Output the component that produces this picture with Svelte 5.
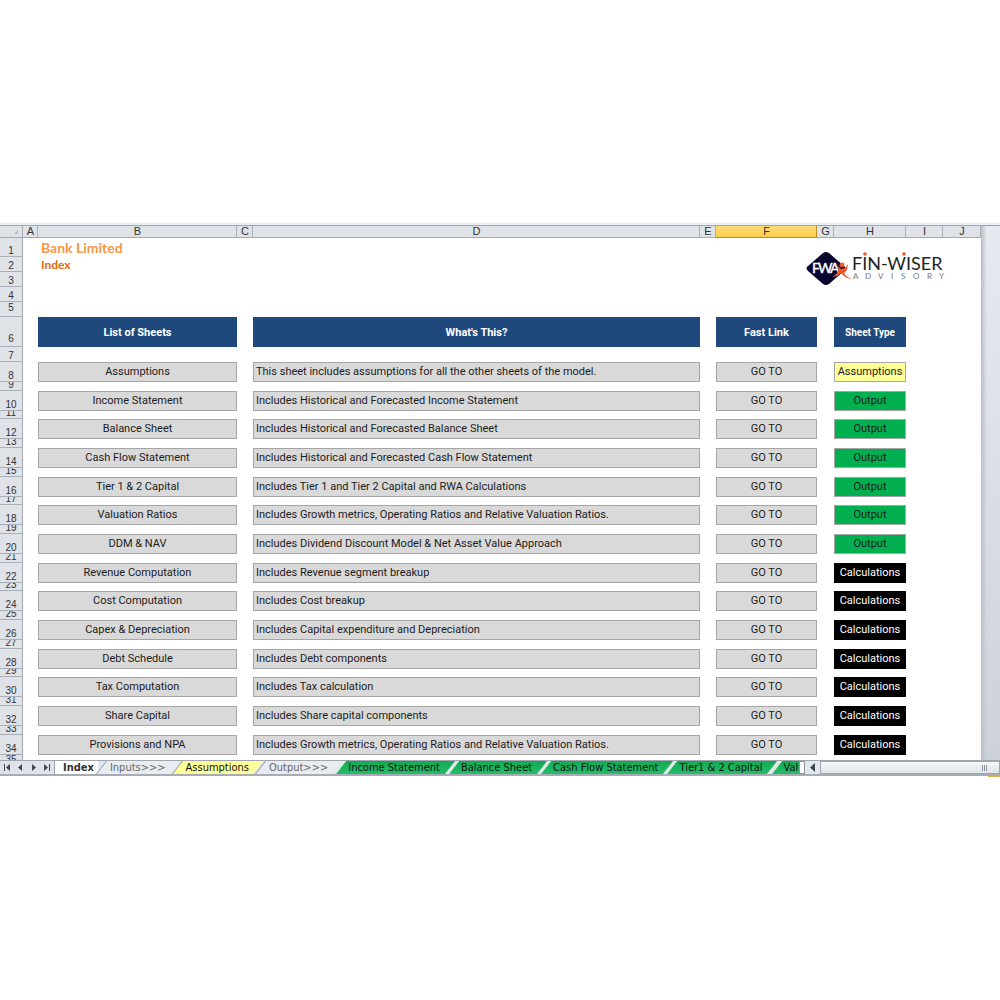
<script lang="ts">
  interface Sheet {
    name: string;
    about: string;
    type: 'Assumptions' | 'Output' | 'Calculations';
  }

  interface Tab {
    label: string;
    kind: 'active' | 'plain' | 'yellow' | 'green';
  }

  const letters = ['A', 'B', 'C', 'D', 'E', 'F', 'G', 'H', 'I', 'J'];

  const sheets: Sheet[] = [
    { name: 'Assumptions', about: 'This sheet includes assumptions for all the other sheets of the model.', type: 'Assumptions' },
    { name: 'Income Statement', about: 'Includes Historical and Forecasted Income Statement', type: 'Output' },
    { name: 'Balance Sheet', about: 'Includes Historical and Forecasted Balance Sheet', type: 'Output' },
    { name: 'Cash Flow Statement', about: 'Includes Historical and Forecasted Cash Flow Statement', type: 'Output' },
    { name: 'Tier 1 & 2 Capital', about: 'Includes Tier 1 and Tier 2 Capital and RWA Calculations', type: 'Output' },
    { name: 'Valuation Ratios', about: 'Includes Growth metrics, Operating Ratios and Relative Valuation Ratios.', type: 'Output' },
    { name: 'DDM & NAV', about: 'Includes Dividend Discount Model & Net Asset Value Approach', type: 'Output' },
    { name: 'Revenue Computation', about: 'Includes Revenue segment breakup', type: 'Calculations' },
    { name: 'Cost Computation', about: 'Includes Cost breakup', type: 'Calculations' },
    { name: 'Capex & Depreciation', about: 'Includes Capital expenditure and Depreciation', type: 'Calculations' },
    { name: 'Debt Schedule', about: 'Includes Debt components', type: 'Calculations' },
    { name: 'Tax Computation', about: 'Includes Tax calculation', type: 'Calculations' },
    { name: 'Share Capital', about: 'Includes Share capital components', type: 'Calculations' },
    { name: 'Provisions and NPA', about: 'Includes Growth metrics, Operating Ratios and Relative Valuation Ratios.', type: 'Calculations' },
  ];

  const tabs: Tab[] = [
    { label: 'Index', kind: 'active' },
    { label: 'Inputs>>>', kind: 'plain' },
    { label: 'Assumptions', kind: 'yellow' },
    { label: 'Output>>>', kind: 'plain' },
    { label: 'Income Statement', kind: 'green' },
    { label: 'Balance Sheet', kind: 'green' },
    { label: 'Cash Flow Statement', kind: 'green' },
    { label: 'Tier1 & 2 Capital', kind: 'green' },
    { label: 'Valuation Ratios', kind: 'green' },
  ];

  const navs = [
    { label: 'First sheet', path: 'M2 1h1v7H2zM8 1v7L4 4.500z' },
    { label: 'Previous sheet', path: 'M6 1v7L2 4.500z' },
    { label: 'Next sheet', path: 'M3 1v7l4-3.500z' },
    { label: 'Last sheet', path: 'M1 1v7l4-3.500zM6 1h1v7H6z' },
  ];
</script>

{#snippet rowNumber(n: number)}
  <th class="number" scope="row"><span>{n}</span></th>
{/snippet}

<main class="workbook">
  <div class="view">
    <table>
      <colgroup>
        <col class="c-num" />
        {#each letters as letter}
          <col class="c-{letter.toLowerCase()}" />
        {/each}
      </colgroup>
      <thead>
        <tr class="letters">
          <th class="corner" aria-label="Select all">
            <svg width="4" height="4" viewBox="0 0 4 4"><path d="M4 0v4H0z" fill="#b4bac2" /></svg>
          </th>
          {#each letters as letter}
            <th scope="col" class:selected={letter === 'F'}>{letter}</th>
          {/each}
        </tr>
      </thead>
      <tbody>
        <tr class="h19">
          {@render rowNumber(1)}
          <td></td>
          <td colspan="5"><h1>Bank Limited</h1></td>
          <td></td>
          <td colspan="3" rowspan="4">
            <svg class="logo" width="140" height="40" viewBox="0 0 140 40" role="img" aria-label="Fin-Wiser Advisory">
              <path
                d="M17 3q3-2 6 0l15 13q3 2 0 5L23 34q-3 2-6 0L2 21q-3-3 0-5z"
                fill="#08062f"
              />
              <text y="23" class="mark">
                <tspan x="6">F</tspan><tspan x="12">W</tspan><tspan x="24">A</tspan>
              </text>
              <circle cx="36" cy="15" r="2.400" fill="#f0562b" />
              <path d="M31 15l4 4 4-1 3-4-1 6-3 3 2 3 7 4-8-3-4-4-4 3-4 1 4-4 2-4z" fill="#f0562b" />
              <text x="46" y="20" class="brand">FIN-WISER</text>
              <circle cx="59" cy="4" r="1.800" fill="#f0562b" />
              <circle cx="98" cy="4" r="1.800" fill="#f0562b" />
              <text y="29" class="tagline">
                <tspan x="47">A</tspan><tspan x="59">D</tspan><tspan x="72">V</tspan><tspan x="85">I</tspan><tspan x="95">S</tspan><tspan x="107">O</tspan><tspan x="121">R</tspan><tspan x="133">Y</tspan>
              </text>
            </svg>
          </td>
        </tr>
        <tr class="h15">
          {@render rowNumber(2)}
          <td></td>
          <td colspan="5"><h2>Index</h2></td>
        </tr>
        {#each [3, 4] as n}
          <tr class="h15">{@render rowNumber(n)}<td colspan="7"></td></tr>
        {/each}
        <tr class="h15 raised">{@render rowNumber(5)}<td colspan="10"></td></tr>
        <tr class="h30">
          {@render rowNumber(6)}
          <td></td>
          <th class="heading">List of Sheets</th>
          <td></td>
          <th class="heading">What's This?</th>
          <td></td>
          <th class="heading">Fast Link</th>
          <td></td>
          <th class="heading small">Sheet Type</th>
          <td colspan="2"></td>
        </tr>
        <tr class="h15">{@render rowNumber(7)}<td colspan="10"></td></tr>
        {#each sheets as sheet, i}
          <tr class="h20">
            {@render rowNumber(8 + i * 2)}
            <td></td>
            <td class="cell">{sheet.name}</td>
            <td></td>
            <td class="cell about">{sheet.about}</td>
            <td></td>
            <td class="cell"><a href="#{sheet.name}">GO TO</a></td>
            <td></td>
            <td class="cell {sheet.type.toLowerCase()}">{sheet.type}</td>
            <td colspan="2"></td>
          </tr>
          <tr class={i === sheets.length - 1 ? 'cut' : i % 3 === 1 ? 'h8' : 'h9'}>
            {@render rowNumber(9 + i * 2)}
            <td colspan="10"></td>
          </tr>
        {/each}
      </tbody>
    </table>
    <div class="gutter"></div>
  </div>

  <footer>
    <div class="navs">
      {#each navs as nav}
        <button aria-label={nav.label}>
          <svg width="9" height="9" viewBox="0 0 9 9"><path d={nav.path} fill="#3c4654" /></svg>
        </button>
      {/each}
    </div>
    <nav class="tabs" aria-label="Sheets">
      {#each tabs as tab}
        <button class="tab {tab.kind}"><span>{tab.label}</span></button>
      {/each}
    </nav>
    <div class="splitter"></div>
    <button class="left" aria-label="Scroll left">
      <svg width="9" height="9" viewBox="0 0 9 9"><path d="M7 0v9L2 4.500z" fill="#3c4654" /></svg>
    </button>
    <div class="scroll"><i></i><i></i><i></i></div>
  </footer>
  <div class="status"></div>
</main>

<style>
  :global(body) {
    background: #fff;
  }

  .workbook {
    padding-top: 223px;
    font-family: Roboto, Calibri, sans-serif;
    font-size: 11px;
    color: #1c1c1c;
  }

  .workbook::before {
    content: "";
    display: block;
    height: 2px;
    background: #e9edf6;
  }

  .view {
    display: flex;
    border-top: 1px solid #a0a6b2;
    background: #fff;
  }

  table {
    flex: 1;
    width: 0;
    table-layout: fixed;
    border-collapse: separate;
    border-spacing: 0;
  }

  th,
  td {
    padding: 0;
  }

  .c-num { width: 23px; }
  .c-a { width: 15px; }
  .c-b { width: 199px; }
  .c-c { width: 16px; }
  .c-e { width: 16px; }
  .c-f { width: 101px; }
  .c-g { width: 17px; }
  .c-h { width: 72px; }
  .c-i { width: 37px; }
  .c-j { width: 38px; }

  .letters th {
    box-sizing: border-box;
    height: 12px;
    padding-left: 1px;
    border-right: 1px solid #a9afb8;
    border-bottom: 1px solid #a3a9b2;
    background: #dfe3e8;
    font: 11px/11px "Liberation Sans", Arial, sans-serif;
    color: #333;
  }

  .letters .selected {
    border-color: #c08a26;
    background: linear-gradient(#fbdc78, #ffd04c);
  }

  .corner svg {
    display: block;
    margin-left: auto;
    margin-right: 4px;
  }

  .number {
    border-right: 1px solid #a3a9b2;
    border-bottom: 1px solid #a9afb8;
    background: #dfe3e8;
    font: 10px/10px "Liberation Sans", Arial, sans-serif;
    color: #333;
    vertical-align: top;
  }

  .number span {
    display: flex;
    align-items: flex-end;
    justify-content: center;
    overflow: hidden;
  }

  .h8 span { height: 7px; }
  .h9 span { height: 8px; }
  .h15 span { height: 14px; }
  .h19 span { height: 18px; }
  .h20 span { height: 19px; }
  .h30 span { height: 27px; padding-bottom: 2px; }
  .raised span { height: 11px; padding-bottom: 3px; }
  .cut span { height: 5px; align-items: flex-start; }
  .cut .number { border-bottom: 0; }

  h1,
  h2 {
    margin: 0;
    padding-left: 3px;
    font-family: Lato, Calibri, sans-serif;
    font-size: 14px;
    line-height: 19px;
    color: #f79646;
    white-space: nowrap;
  }

  h2 {
    font-size: 12px;
    line-height: 14px;
    color: #e26b0a;
  }

  .logo {
    display: block;
    margin: 0 0 0 -28px;
    overflow: visible;
  }

  .mark {
    font: 14px Lato, sans-serif;
    fill: #fff;
    stroke: #fff;
    stroke-width: 0.4px;
  }

  .brand {
    font: 18px Lato, sans-serif;
    fill: #222;
  }

  .tagline {
    font: 8px Lato, sans-serif;
    fill: #777;
  }

  .heading {
    background: #1f497d;
    color: #fff;
  }

  .heading.small {
    font-size: 10px;
  }

  .cell {
    border: 1px solid #a6a6a6;
    background: #d9d9d9;
    line-height: 18px;
    text-align: center;
    white-space: nowrap;
  }

  .about {
    padding-left: 2px;
    text-align: left;
  }

  .cell a {
    display: block;
    color: inherit;
    text-decoration: none;
  }

  .assumptions {
    background: #ffff99;
  }

  .output {
    background: #00b050;
  }

  .calculations {
    border-color: #000;
    background: #000;
    color: #fff;
  }

  .gutter {
    width: 19px;
    background: linear-gradient(90deg, #b9bfc8, transparent 6px), linear-gradient(#e6eaf0, #cdd2da);
  }

  footer {
    display: flex;
    height: 13px;
    border-top: 1px solid #a0a6af;
    border-bottom: 2px solid #a5acb6;
    background: #e4e8ee;
  }

  button {
    padding: 0;
    border: 0;
    background: none;
    font: inherit;
  }

  .navs {
    display: flex;
    flex: none;
    justify-content: space-around;
    width: 54px;
    border-right: 1px solid #a0a6af;
    background: #dfe3e9;
  }

  .navs button,
  .left {
    display: flex;
    align-items: center;
  }

  .tabs {
    display: flex;
    flex: 0 1 744px;
    overflow: hidden;
  }

  .tab {
    position: relative;
    flex: none;
    padding: 0 8px 0 12px;
    font: 11px/13px "DejaVu Sans Condensed", "DejaVu Sans", sans-serif;
    color: #111;
  }

  .tab::before {
    content: "";
    position: absolute;
    inset: 0 -1px 0 3px;
    border-left: 1px solid #8e959f;
    background: #e8ebf0;
    transform: skewX(-38deg);
  }

  .tab span {
    position: relative;
  }

  .active {
    padding: 0 4px 0 8px;
    background: #fff;
    font-weight: bold;
    color: #333;
  }

  .active::before {
    content: none;
  }

  .plain {
    color: #666;
  }

  .yellow::before {
    background: #ffff99;
  }

  .green {
    padding-right: 9px;
  }

  .green::before {
    border-left: 2px solid #d5f0df;
    background: linear-gradient(#12a854, #26bd69);
  }

  .splitter {
    flex: none;
    width: 4px;
    border: 1px solid #8e959f;
    background: #fff;
  }

  .left {
    flex: none;
    justify-content: center;
    width: 15px;
  }

  .scroll {
    display: flex;
    flex: 1;
    align-items: center;
    justify-content: flex-end;
    gap: 1px;
    padding-right: 12px;
    border: 1px solid #a0a6af;
    background: linear-gradient(#f7f8fa, #dfe3e9);
  }

  .scroll i {
    width: 1px;
    height: 6px;
    background: #8e959f;
  }

  .status {
    width: 12px;
    height: 1px;
    margin-left: auto;
    background: #e0ad4c;
  }
</style>
